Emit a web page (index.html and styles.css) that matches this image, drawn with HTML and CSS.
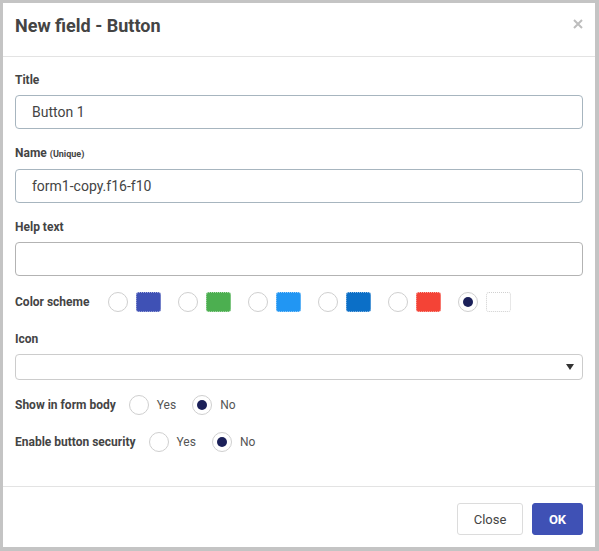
FILE: index.html
```html
<!DOCTYPE html>
<html>
<head>
<meta charset="utf-8">
<link rel="stylesheet" href="styles.css">
</head>
<body>
<div class="dialog">
  <div class="header">
    <h1 class="title">New field - Button</h1>
    <svg class="close-x" width="10" height="10" viewBox="0 0 10 10"><path d="M1 1L9 9M9 1L1 9" stroke="#bdbdbd" stroke-width="2"/></svg>
  </div>
  <div class="body">
    <div class="group">
      <div class="label">Title</div>
      <div class="input blue">Button 1</div>
    </div>
    <div class="group">
      <div class="label">Name <span class="small">(Unique)</span></div>
      <div class="input blue">form1-copy.f16-f10</div>
    </div>
    <div class="group">
      <div class="label">Help text</div>
      <div class="input"></div>
    </div>
    <div class="colors">
      <div class="label inline cs-label">Color scheme</div>
      <div class="swatch"><span class="radio"></span><span class="sq c1"></span></div>
      <div class="swatch"><span class="radio"></span><span class="sq c2"></span></div>
      <div class="swatch"><span class="radio"></span><span class="sq c3"></span></div>
      <div class="swatch"><span class="radio"></span><span class="sq c4"></span></div>
      <div class="swatch"><span class="radio"></span><span class="sq c5"></span></div>
      <div class="swatch"><span class="radio checked"></span><span class="sq c6"></span></div>
    </div>
    <div class="group icon-group">
      <div class="label">Icon</div>
      <div class="select"><span class="arrow"></span></div>
    </div>
    <div class="radio-row">
      <div class="label inline">Show in form body</div>
      <span class="radio"></span><span class="opt">Yes</span>
      <span class="radio checked"></span><span class="opt">No</span>
    </div>
    <div class="radio-row second">
      <div class="label inline">Enable button security</div>
      <span class="radio"></span><span class="opt">Yes</span>
      <span class="radio checked"></span><span class="opt">No</span>
    </div>
  </div>
  <div class="footer">
    <button class="btn btn-close">Close</button>
    <button class="btn btn-ok">OK</button>
  </div>
</div>
</body>
</html>
```
FILE: styles.css
```css
html, body {
  margin: 0;
  padding: 0;
}
body {
  background: #c4c4c4;
  padding: 3px 4px 4px 3px;
  width: 599px;
  height: 551px;
  box-sizing: border-box;
  font-family: Roboto, "Noto Sans", Arial, sans-serif;
  color: #444;
}
.dialog {
  background: #fff;
  height: 544px;
  display: flex;
  flex-direction: column;
}
.header {
  height: 54px;
  box-sizing: border-box;
  border-bottom: 1px solid #e3e3e3;
  padding: 12px 12px 0 12px;
  display: flex;
  justify-content: space-between;
  align-items: flex-start;
}
.title {
  margin: 0;
  font-size: 18px;
  line-height: 22px;
  font-weight: 700;
  color: #444;
}
.close-x {
  margin-top: 4px;
}
.body {
  padding: 15px 12px 0 12px;
}
.group {
  margin-bottom: 16px;
}
.label {
  font-size: 12px;
  line-height: 16px;
  font-weight: 700;
  color: #444;
  margin-bottom: 7px;
}
.label.inline {
  margin-bottom: 0;
}
.small {
  font-size: 9px;
  font-weight: 700;
}
.input {
  height: 34px;
  box-sizing: border-box;
  border: 1px solid #b3b3b3;
  border-radius: 4px;
  padding: 0 16px;
  font-size: 14px;
  line-height: 32px;
  color: #444;
}
.input.blue {
  border-color: #a7b5bf;
}
.colors {
  display: flex;
  align-items: center;
  height: 20px;
}
.cs-label {
  width: 93px;
}
.swatch {
  display: flex;
  align-items: center;
  gap: 8px;
  margin-right: 17px;
}
.radio {
  width: 20px;
  height: 20px;
  box-sizing: border-box;
  border: 1px solid #cfcfcf;
  border-radius: 50%;
  display: flex;
  align-items: center;
  justify-content: center;
  flex: none;
}
.radio.checked::after {
  content: "";
  width: 10px;
  height: 10px;
  border-radius: 50%;
  background: #1b2059;
}
.sq {
  width: 25px;
  height: 20px;
  box-sizing: border-box;
  border-radius: 3px;
  border: 1px dotted rgba(255, 255, 255, 0.55);
}
.c1 { background: #3f51b5; }
.c2 { background: #4caf50; }
.c3 { background: #2196f3; }
.c4 { background: #0b6fc7; }
.c5 { background: #f44336; }
.c6 { background: #fff; border-color: #d0d0d0; }
.icon-group {
  margin-top: 19px;
  margin-bottom: 15px;
}
.select {
  height: 26px;
  box-sizing: border-box;
  border: 1px solid #cccccc;
  border-radius: 4px;
  display: flex;
  align-items: center;
  justify-content: flex-end;
  padding-right: 8px;
}
.arrow {
  width: 0;
  height: 0;
  border-left: 4px solid transparent;
  border-right: 4px solid transparent;
  border-top: 6px solid #333;
}
.radio-row {
  display: flex;
  align-items: center;
  height: 20px;
}
.radio-row.second {
  margin-top: 17px;
}
.radio-row .label {
  margin-right: 13px;
}
.opt {
  font-size: 12px;
  color: #555;
  margin-left: 8px;
  margin-right: 16px;
}
.footer {
  margin-top: auto;
  border-top: 1px solid #e3e3e3;
  padding: 16px 12px 12px 12px;
  display: flex;
  justify-content: flex-end;
  gap: 9px;
}
.btn {
  height: 32px;
  border-radius: 3px;
  font-family: Roboto, "Noto Sans", Arial, sans-serif;
  font-size: 13px;
  padding: 0;
  cursor: pointer;
}
.btn-close {
  width: 66px;
  background: #fff;
  border: 1px solid #dcdcdc;
  color: #444;
}
.btn-ok {
  width: 51px;
  background: #3f51b5;
  border: 1px solid #3f51b5;
  color: #fff;
  font-weight: 700;
}
```
